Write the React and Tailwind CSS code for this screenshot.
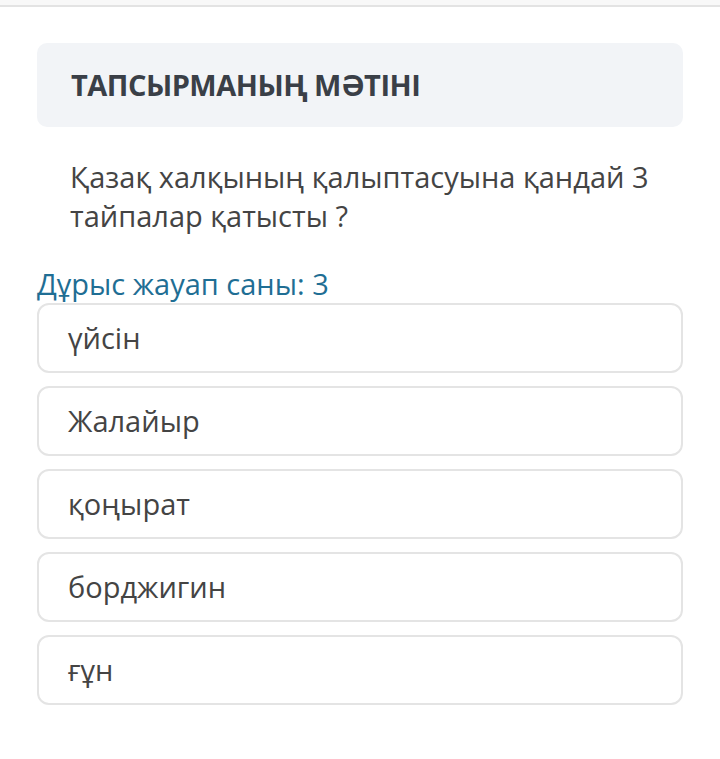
export default function App() {
  const options = ["үйсін", "Жалайыр", "қоңырат", "борджигин", "ғұн"];
  return (
    <div className="w-[720px] h-[759px] bg-white overflow-hidden" style={{ fontFamily: '"Open Sans", sans-serif' }}>
      <div className="h-[5px] bg-[#f8f8f8]" />
      <div className="h-[2px] bg-[#e3e3e3]" />
      <div className="px-[37px] pt-[36px]">
        <div className="h-[84px] rounded-[10px] bg-[#f2f4f7] flex items-center pl-[34px]">
          <span className="text-[29px] font-bold text-[#3a3f47] tracking-[-0.5px]">ТАПСЫРМАНЫҢ МӘТІНІ</span>
        </div>
        <div className="pl-[33px] pt-[30px] text-[29px] leading-[39px] text-[#444444]">
          Қазақ халқының қалыптасуына қандай 3<br />тайпалар қатысты ?
        </div>
        <div className="mt-[29px] text-[29px] leading-[39px] text-[#1f6e94]">Дұрыс жауап саны: 3</div>
        <div className="flex flex-col gap-[13px]">
          {options.map((o) => (
            <div key={o} className="h-[70px] rounded-[12px] border-2 border-[#e4e4e4] flex items-center pl-[29px] text-[29px] text-[#444444]">
              {o}
            </div>
          ))}
        </div>
      </div>
    </div>
  );
}
